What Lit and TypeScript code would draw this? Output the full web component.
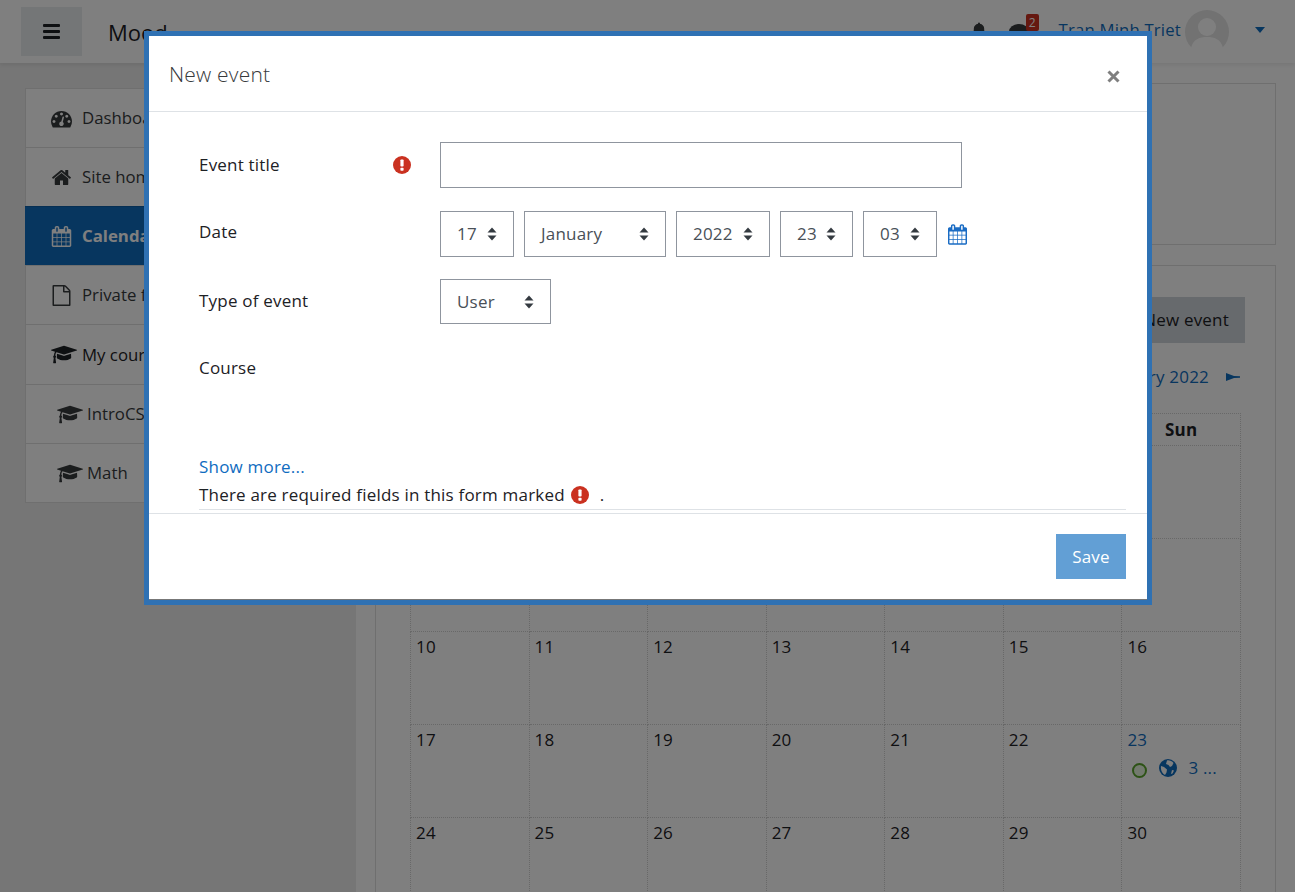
import {LitElement, html, css, svg} from 'lit';
import {customElement} from 'lit/decorators.js';

const icons = {
    dashboard: {box: '0 0 1792 1792', d: 'M384 1152q0-53-37.500-90.500t-90.500-37.500-90.500 37.500-37.500 90.500 37.500 90.500 90.500 37.500 90.500-37.500 37.500-90.500zm192-448q0-53-37.500-90.500t-90.500-37.500-90.500 37.500-37.500 90.500 37.500 90.500 90.500 37.500 90.500-37.500 37.500-90.500zm428 481l101-382q6-26-7.500-48.500t-38.500-29.500-48 6.500-30 39.500l-101 382q-60 5-107 43.500t-63 98.500q-20 77 20 146t117 89 146-20 89-117q16-60-6-117t-72-91zm660-33q0-53-37.500-90.500t-90.500-37.500-90.500 37.500-37.500 90.500 37.500 90.500 90.500 37.500 90.500-37.500 37.500-90.500zm-640-640q0-53-37.500-90.500t-90.500-37.500-90.500 37.500-37.500 90.500 37.500 90.500 90.500 37.500 90.500-37.500 37.500-90.500zm448 192q0-53-37.500-90.500t-90.500-37.500-90.500 37.500-37.500 90.500 37.500 90.500 90.500 37.500 90.500-37.500 37.500-90.500zm320 448q0 261-141 483-19 29-54 29h-1402q-35 0-54-29-141-221-141-483 0-182 71-348t191-286 286-191 348-71 348 71 286 191 191 286 71 348z'},
    home: {box: '0 0 1792 1792', d: 'M1472 992v480q0 26-19 45t-45 19h-384v-384h-256v384h-384q-26 0-45-19t-19-45v-480q0-1 .5-3t.5-3l575-474 575 474q1 2 1 6zm223-69l-62 74q-8 9-21 11h-3q-13 0-21-7l-692-577-692 577q-12 8-24 7-13-2-21-11l-62-74q-8-10-7-23.500t11-21.500l719-599q32-26 76-26t76 26l244 204v-195q0-14 9-23t23-9h192q14 0 23 9t9 23v408l219 182q10 8 11 21.500t-7 23.500z'},
    calendar: {box: '0 0 1664 1792', d: 'M128 1664h288v-288h-288v288zm352 0h320v-288h-320v288zm-352-352h288v-320h-288v320zm352 0h320v-320h-320v320zm-352-384h288v-288h-288v288zm736 736h320v-288h-320v288zm-384-736h320v-288h-320v288zm768 736h288v-288h-288v288zm-384-352h320v-320h-320v320zm-352-864v-288q0-13-9.500-22.500t-22.500-9.500h-64q-13 0-22.500 9.500t-9.500 22.500v288q0 13 9.500 22.500t22.500 9.500h64q13 0 22.500-9.500t9.500-22.500zm736 864h288v-320h-288v320zm-384-384h320v-288h-320v288zm384 0h288v-288h-288v288zm32-480v-288q0-13-9.500-22.500t-22.500-9.500h-64q-13 0-22.500 9.500t-9.500 22.500v288q0 13 9.500 22.500t22.500 9.500h64q13 0 22.500-9.500t9.500-22.500zm384-64v1280q0 52-38 90t-90 38h-1408q-52 0-90-38t-38-90v-1280q0-52 38-90t90-38h128v-96q0-66 47-113t113-47h64q66 0 113 47t47 113v96h384v-96q0-66 47-113t113-47h64q66 0 113 47t47 113v96h128q52 0 90 38t38 90z'},
    file: {box: '100 0 1592 1792', d: 'M1596 380q28 28 48 76t20 88v1152q0 40-28 68t-68 28h-1344q-40 0-68-28t-28-68v-1600q0-40 28-68t68-28h896q40 0 88 20t76 48zm-444-244v376h376q-10-29-22-41l-313-313q-12-12-41-22zm384 1528v-1024h-416q-40 0-68-28t-28-68v-416h-768v1536h1280z'},
    cap: {box: '0 0 2304 1792', d: 'M1774 836l18 316q4 69-82 128t-235 93.500-323 34.500-323-34.500-235-93.500-82-128l18-316 574 181q22 7 48 7t48-7zm530-324q0 23-22 31l-1120 352q-4 1-10 1t-10-1l-652-206q-43 34-71 111.500t-34 178.500q63 36 63 109 0 69-58 107l58 433q2 14-8 25-9 11-24 11h-192q-15 0-24-11-10-11-8-25l58-433q-58-38-58-107 0-73 65-111 11-207 98-330l-333-104q-22-8-22-31t22-31l1120-352q4-1 10-1t10 1l1120 352q22 8 22 31z'},
    bell: {box: '0 0 1792 1792', d: 'M912 1696q0-16-16-16-59 0-101.500-42.500t-42.500-101.500q0-16-16-16t-16 16q0 73 51.500 124.500t124.500 51.500q16 0 16-16zm816-288q0 52-38 90t-90 38h-448q0 106-75 181t-181 75-181-75-75-181h-448q-52 0-90-38t-38-90q50-42 91-88t85-119.500 74.500-158.500 50-206 19.500-260q0-152 117-282.500t307-158.500q-8-19-8-39 0-40 28-68t68-28 68 28 28 68q0 20-8 39 190 28 307 158.500t117 282.500q0 139 19.500 260t50 206 74.500 158.500 85 119.500 91 88z'},
};

type IconName = keyof typeof icons;

const icon = (name: IconName, cls = '') => html`
    <svg class="icon ${cls}" viewBox=${icons[name].box} aria-hidden="true">${svg`<path d=${icons[name].d}></path>`}</svg>`;

const required = () => html`
    <svg class="required" viewBox="0 0 18 18" aria-label="Required">
        <circle cx="9" cy="9" r="9" fill="#ca3120"></circle>
        <rect x="7.4" y="3.400" width="3.200" height="7.200" rx="0.800" fill="#fff"></rect>
        <rect x="7.4" y="11.800" width="3.200" height="3" rx="0.800" fill="#fff"></rect>
    </svg>`;

const sortArrows = () => html`
    <svg class="sort" viewBox="0 0 10 14" aria-hidden="true">
        <path d="M5 0.500 9.500 5.500H0.500Z"></path>
        <path d="M5 13.500 0.500 8.500H9.500Z"></path>
    </svg>`;

const menu: {name: IconName; label: string; cls?: string}[] = [
    {name: 'dashboard', label: 'Dashboard'},
    {name: 'home', label: 'Site home'},
    {name: 'calendar', label: 'Calendar', cls: 'active'},
    {name: 'file', label: 'Private files'},
    {name: 'cap', label: 'My courses', cls: 'strong'},
    {name: 'cap', label: 'IntroCS', cls: 'nested'},
    {name: 'cap', label: 'Math', cls: 'nested'},
];

const weeks = [
    ['', '', '', '', '', '1', '2'],
    ['3', '4', '5', '6', '7', '8', '9'],
    ['10', '11', '12', '13', '14', '15', '16'],
    ['17', '18', '19', '20', '21', '22', '23'],
    ['24', '25', '26', '27', '28', '29', '30'],
];

const dateParts = [
    {value: '17', width: 74},
    {value: 'January', width: 142},
    {value: '2022', width: 94},
    {value: '23', width: 73},
    {value: '03', width: 74},
];

@customElement('app-root')
export class AppRoot extends LitElement {
    static styles = css`
        :host {
            display: block;
            position: relative;
            height: 892px;
            overflow: hidden;
            background: #fff;
            color: #1d2125;
            font-family: "Open Sans", "Noto Sans", sans-serif;
            font-size: 17px;
            letter-spacing: .2px;
            line-height: 24px;
        }

        .icon {
            fill: currentColor;
            flex: none;
        }

        /* navbar */
        .navbar {
            display: flex;
            align-items: center;
            height: 63px;
            padding: 0 30px 0 21px;
            background: #fff;
            box-shadow: 0 2px 4px rgba(0, 0, 0, .08);
            position: relative;
            box-sizing: border-box;
        }

        .burger {
            display: flex;
            flex-direction: column;
            justify-content: center;
            gap: 3px;
            align-items: center;
            width: 61px;
            height: 49px;
            background: #e9ecef;
        }

        .burger span {
            width: 17px;
            height: 3px;
            border-radius: 1px;
            background: #1d2125;
        }

        .brand {
            margin-left: 26px;
            font-size: 22px;
            letter-spacing: 0;
            color: #1d2125;
        }

        .nav-right {
            margin-left: auto;
            display: flex;
            align-items: center;
        }

        .bell {
            width: 18px;
            height: 21px;
            color: #373a3c;
            margin-right: 21px;
        }

        .msg {
            position: relative;
            width: 20px;
            height: 15px;
            border-radius: 50%;
            background: #373a3c;
            margin-right: 30px;
        }

        .badge {
            position: absolute;
            left: 17px;
            top: -10px;
            width: 13px;
            height: 17px;
            border-radius: 2px;
            background: #ca3120;
            color: #fff;
            font-size: 12px;
            line-height: 17px;
            letter-spacing: 0;
            text-align: center;
        }

        .user {
            color: #0f6cbf;
            font-size: 16.700px;
            margin-top: -4px;
        }

        .avatar {
            width: 44px;
            height: 44px;
            margin-left: 4px;
        }

        .caret {
            margin: -4px 0 0 26px;
            width: 0;
            height: 0;
            border-left: 5.500px solid transparent;
            border-right: 5.500px solid transparent;
            border-top: 6px solid #0f6cbf;
        }

        /* page under the dialog */
        .page {
            display: flex;
            height: 829px;
        }

        .side {
            width: 356px;
            flex: none;
            box-sizing: border-box;
            padding: 25px 0 0 25px;
            background: #ececec;
        }

        .menu {
            width: 300px;
            background: #fff;
            border: 1px solid rgba(0, 0, 0, .125);
            color: #373a3c;
            box-sizing: border-box;
            font-size: 16.800px;
            letter-spacing: 0;
        }

        .menu-item {
            display: flex;
            align-items: center;
            height: 59px;
            padding-left: 25px;
            box-sizing: border-box;
            border-top: 1px solid rgba(0, 0, 0, .125);
            gap: 10px;
        }

        .menu-item:first-child {
            height: 58px;
            border-top: 0;
        }

        .menu-item .icon {
            width: 21px;
            height: 21px;
        }

        .menu-item.active {
            margin: 0 -1px;
            padding-left: 26px;
            background: #0f6cbf;
            color: #fff;
            font-weight: 700;
        }

        .menu-item.strong {
            height: 60px;
            color: #1d2125;
        }

        .menu-item.strong .icon {
            width: 26px;
            margin-right: -5px;
        }

        .menu-item.nested {
            padding-left: 31px;
            gap: 4px;
        }

        .menu-item.nested .icon {
            width: 26px;
        }

        .main {
            flex: 1;
            padding: 20px 19px 0 19px;
        }

        .card {
            border: 1px solid rgba(0, 0, 0, .125);
            box-sizing: border-box;
        }

        .card.top {
            height: 162px;
            margin-bottom: 20px;
        }

        .card.calendar {
            padding: 31px 30px 0 34px;
        }

        .toolbar {
            display: flex;
            justify-content: flex-end;
        }

        .new-btn {
            padding: 11px 16px;
            background: #ced4da;
            color: #1d2125;
        }

        .month-nav {
            display: flex;
            justify-content: flex-end;
            align-items: center;
            gap: 17px;
            height: 24px;
            margin: 22px 5px 24px 0;
            color: #0f6cbf;
        }

        .next {
            width: 14px;
            height: 8px;
            fill: #0f6cbf;
        }

        table {
            width: 831px;
            table-layout: fixed;
            border-collapse: collapse;
        }

        th, td {
            border: 1px dotted #d0d0d0;
            padding: 0;
        }

        th {
            height: 31px;
            font-weight: 700;
        }

        td {
            height: 93px;
            box-sizing: border-box;
            vertical-align: top;
            padding: 3px 5px;
        }

        .today {
            color: #0f6cbf;
        }

        .events {
            display: flex;
            align-items: center;
            color: #0f6cbf;
            margin: 4px 0 0 5px;
        }

        .dot {
            width: 11px;
            height: 11px;
            border: 2px solid #5aa52c;
            border-radius: 50%;
            background: #e6f5de;
            margin-top: 4px;
        }

        .globe {
            width: 18px;
            height: 18px;
            margin-left: 12px;
        }

        .more {
            margin-left: 11px;
        }

        /* dialog */
        .backdrop {
            position: absolute;
            inset: 0;
            background: rgba(0, 0, 0, .5);
        }

        .modal {
            position: absolute;
            left: 144px;
            top: 31px;
            width: 1008px;
            height: 574px;
            box-sizing: border-box;
            border: 5px solid #2f71b3;
            background: #fff;
            display: flex;
            flex-direction: column;
        }

        .modal-head {
            display: flex;
            justify-content: space-between;
            align-items: center;
            flex: none;
            height: 76px;
            box-sizing: border-box;
            padding: 0 27px 0 20px;
            border-bottom: 1px solid #dee2e6;
        }

        .modal-title {
            font-size: 21px;
            font-weight: 300;
            color: #373a3c;
        }

        .close {
            width: 13px;
            height: 13px;
            stroke: #7f7f7f;
            stroke-width: 3;
            margin-top: 6px;
        }

        .modal-body {
            flex: none;
            height: 401px;
            box-sizing: border-box;
            padding: 30px 21px 0 50px;
            overflow: hidden;
        }

        .row {
            display: grid;
            grid-template-columns: 194px 47px 1fr;
            margin-bottom: 22px;
        }

        .row:first-child {
            margin-bottom: 23px;
        }

        .row > label {
            padding-top: 9px;
        }

        .row:first-child > label {
            padding-top: 11px;
        }

        .row .mark {
            display: flex;
            align-items: center;
            height: 46px;
        }

        .required {
            width: 18px;
            height: 18px;
            flex: none;
        }

        .text-input {
            width: 522px;
            height: 46px;
            box-sizing: border-box;
            border: 1px solid #8f959e;
        }

        .controls {
            display: flex;
            align-items: center;
            gap: 10px;
        }

        .select {
            display: flex;
            align-items: center;
            justify-content: space-between;
            height: 46px;
            box-sizing: border-box;
            padding: 0 16px;
            border: 1px solid #8f959e;
            color: #495057;
        }

        .select.type {
            width: 111px;
            height: 45px;
        }

        .sort {
            width: 10px;
            height: 14px;
            fill: #343a40;
            flex: none;
        }

        .pick {
            width: 19px;
            height: 21px;
            color: #1a6cc4;
            margin-left: 1px;
        }

        .course {
            height: 109px;
            margin-bottom: 0;
        }

        .type-row > label {
            padding-top: 10px;
        }

        .course > label {
            padding-top: 10px;
        }

        .show-more {
            color: #0f6cbf;
            display: block;
            height: 26px;
            line-height: 24px;
        }

        .note {
            display: flex;
            align-items: center;
            height: 27px;
            gap: 6px;
            border-bottom: 1px solid #dee2e6;
            padding-bottom: 1px;
            box-sizing: content-box;
        }

        .note .required {
            margin-right: 5px;
        }

        .modal-foot {
            flex: 1;
            display: flex;
            justify-content: flex-end;
            align-items: flex-start;
            padding: 20px 21px 0 0;
            border-top: 1px solid #dee2e6;
            border-bottom: 1px solid #777;
        }

        .save {
            width: 70px;
            height: 45px;
            display: flex;
            align-items: center;
            justify-content: center;
            background: #629fd5;
            color: #fff;
        }
    `;

    renderNavbar() {
        return html`
            <header class="navbar">
                <div class="burger"><span></span><span></span><span></span></div>
                <div class="brand">Mood</div>
                <div class="nav-right">
                    ${icon('bell', 'bell')}
                    <div class="msg"><span class="badge">2</span></div>
                    <span class="user">Tran Minh Triet</span>
                    <svg class="avatar" viewBox="0 0 44 44" aria-hidden="true">
                        <circle cx="22" cy="22" r="22" fill="#e4e4e4"></circle>
                        <circle cx="22" cy="17" r="9" fill="#fff"></circle>
                        <path d="M6 38c2-9 9-11 16-11s14 2 16 11a22 22 0 0 1-32 0z" fill="#fff"></path>
                    </svg>
                    <span class="caret"></span>
                </div>
            </header>
        `;
    }

    renderSide() {
        return html`
            <nav class="side">
                <div class="menu">
                    ${menu.map(item => html`
                        <div class="menu-item ${item.cls ?? ''}">
                            ${icon(item.name)}<span>${item.label}</span>
                        </div>
                    `)}
                </div>
            </nav>
        `;
    }

    renderCalendar() {
        return html`
            <table>
                <thead>
                    <tr>${['Mon', 'Tue', 'Wed', 'Thu', 'Fri', 'Sat', 'Sun'].map(d => html`<th>${d}</th>`)}</tr>
                </thead>
                <tbody>
                    ${weeks.map(week => html`
                        <tr>
                            ${week.map(day => day === '23'
                                ? html`<td>
                                    <div class="today">${day}</div>
                                    <div class="events">
                                        <span class="dot"></span>
                                        <svg class="globe" viewBox="0 0 18 18" aria-hidden="true">
                                            <circle cx="9" cy="9" r="9" fill="#0f6cbf"></circle>
                                            <path d="M8 1.500c2-.5 5 .5 6.500 2.500L13 7l-2 1-1.500-2L7 5zM2 7l3 1 3 2.500-.5 3L6 16c-3-1.500-4.500-5-4-9zM13 11l2 .5-1.500 3-1.500.5z" fill="#fff"></path>
                                        </svg>
                                        <span class="more">3 ...</span>
                                    </div>
                                </td>`
                                : html`<td>${day}</td>`)}
                        </tr>
                    `)}
                </tbody>
            </table>
        `;
    }

    renderModal() {
        return html`
            <section class="modal" role="dialog">
                <div class="modal-head">
                    <div class="modal-title">New event</div>
                    <svg class="close" viewBox="0 0 13 13" aria-label="Close">
                        <path d="M1.500 1.500 11.500 11.500M11.500 1.500 1.500 11.500"></path>
                    </svg>
                </div>
                <div class="modal-body">
                    <div class="row">
                        <label>Event title</label>
                        <div class="mark">${required()}</div>
                        <div class="text-input"></div>
                    </div>
                    <div class="row">
                        <label>Date</label>
                        <div></div>
                        <div class="controls">
                            ${dateParts.map(part => html`
                                <div class="select" style="width:${part.width}px">${part.value}${sortArrows()}</div>
                            `)}
                            ${icon('calendar', 'pick')}
                        </div>
                    </div>
                    <div class="row type-row">
                        <label>Type of event</label>
                        <div></div>
                        <div class="controls">
                            <div class="select type">User${sortArrows()}</div>
                        </div>
                    </div>
                    <div class="row course">
                        <label>Course</label>
                    </div>
                    <a class="show-more">Show more...</a>
                    <div class="note">There are required fields in this form marked ${required()} .</div>
                </div>
                <div class="modal-foot">
                    <div class="save">Save</div>
                </div>
            </section>
        `;
    }

    render() {
        return html`
            ${this.renderNavbar()}
            <div class="page">
                ${this.renderSide()}
                <main class="main">
                    <div class="card top"></div>
                    <div class="card calendar">
                        <div class="toolbar"><div class="new-btn">New event</div></div>
                        <div class="month-nav">
                            <span>January 2022</span>
                            <svg class="next" viewBox="0 0 14 8" aria-hidden="true">
                                <path d="M0 0 8 3 14 3.300V4.700L8 5 0 8Z"></path>
                            </svg>
                        </div>
                        ${this.renderCalendar()}
                    </div>
                </main>
            </div>
            <div class="backdrop"></div>
            ${this.renderModal()}
        `;
    }
}
